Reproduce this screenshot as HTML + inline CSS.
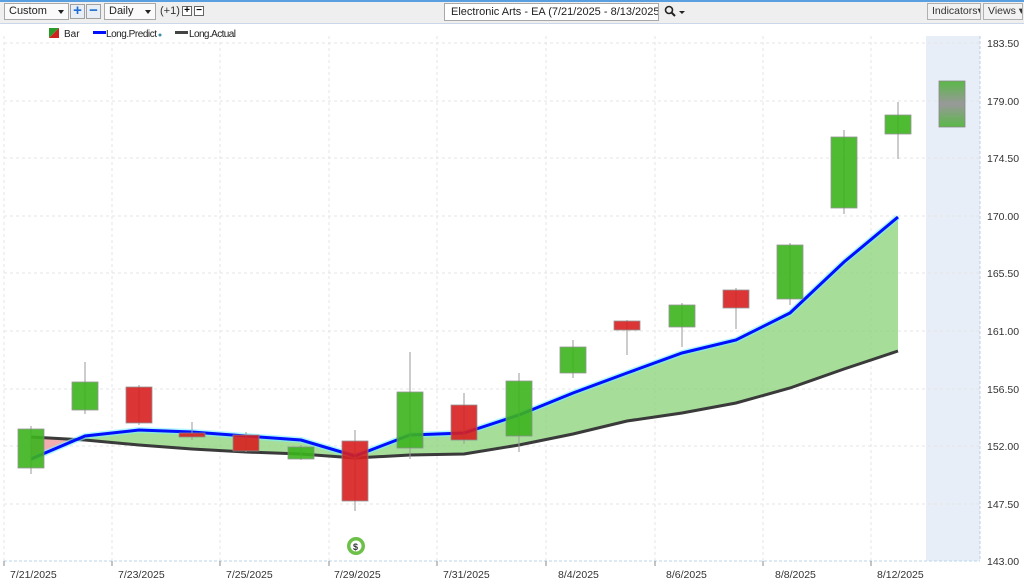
<!DOCTYPE html>
<html><head><meta charset="utf-8"><style>
body{margin:0;width:1024px;height:584px;overflow:hidden;background:#fff;font-family:"Liberation Sans",sans-serif;}
.tb{position:absolute;left:0;top:0;width:1024px;height:24px;background:#efefef;border-top:2px solid #5aa0e0;border-bottom:1px solid #c8d8e8;box-sizing:border-box;}
.dd{position:absolute;top:3px;height:17px;background:#fafafa;border:1px solid #a8a8a8;box-sizing:border-box;font-size:11px;line-height:15px;padding-left:4px;color:#222;white-space:nowrap;}
.dd:after{content:"";position:absolute;right:4px;top:6px;border-left:3px solid transparent;border-right:3px solid transparent;border-top:4px solid #222;}
.pb{position:absolute;top:4px;width:15px;height:15px;border:1px solid #a0a0a0;box-sizing:border-box;background:#e8eef6;color:#1c6fd0;font-weight:bold;font-size:15px;line-height:12px;text-align:center;}
.sb{position:absolute;top:6px;width:10px;height:10px;border:1px solid #666;box-sizing:border-box;background:#fff;font-size:10px;line-height:8px;text-align:center;font-weight:bold;}
.btn{position:absolute;top:3px;height:17px;border:1px solid #b0b0b0;box-sizing:border-box;background:#f2f2f2;font-size:10.5px;line-height:15px;padding-left:4px;color:#333;white-space:nowrap;overflow:hidden;}
</style></head><body>
<div class="tb"></div>
<div class="dd" style="left:4px;width:65px">Custom</div>
<div class="pb" style="left:70px">+</div>
<div class="pb" style="left:86px">−</div>
<div class="dd" style="left:104px;width:52px">Daily</div>
<div style="position:absolute;left:160px;top:5px;font-size:11px;color:#333">(+1)</div>
<div class="sb" style="left:182px">+</div>
<div class="sb" style="left:194px">−</div>
<div style="position:absolute;left:444px;top:3px;width:215px;height:18px;border:1px solid #a8a8a8;box-sizing:border-box;background:#fff;font-size:11px;line-height:16px;padding-left:6px;color:#222;white-space:nowrap;overflow:hidden">Electronic Arts - EA (7/21/2025 - 8/13/2025)</div>
<svg style="position:absolute;left:664px;top:5px" width="24" height="14"><circle cx="5" cy="5" r="3.5" fill="none" stroke="#222" stroke-width="1.6"/><line x1="7.5" y1="7.5" x2="11" y2="11" stroke="#222" stroke-width="2"/><path d="M15 6 L21 6 L18 9Z" fill="#222"/></svg>
<div class="btn" style="left:927px;width:54px">Indicators▾</div>
<div class="btn" style="left:983px;width:40px">Views ▾</div>
<svg style="position:absolute;left:0;top:0" width="1024" height="584" font-family="Liberation Sans, sans-serif">
<rect x="926" y="36" width="54" height="525" fill="#e8eef7"/>
<line x1="980" y1="36" x2="980" y2="561" stroke="#b8cfe6" stroke-dasharray="3,2"/>
<g stroke="#e4e4e4" stroke-dasharray="3,3">
<line x1="4" y1="43" x2="980" y2="43"/><line x1="4" y1="101" x2="980" y2="101"/><line x1="4" y1="158" x2="980" y2="158"/><line x1="4" y1="216" x2="980" y2="216"/><line x1="4" y1="273" x2="980" y2="273"/><line x1="4" y1="331" x2="980" y2="331"/><line x1="4" y1="389" x2="980" y2="389"/><line x1="4" y1="446" x2="980" y2="446"/><line x1="4" y1="504" x2="980" y2="504"/>
<line x1="4" y1="36" x2="4" y2="561"/><line x1="112" y1="36" x2="112" y2="561"/><line x1="220" y1="36" x2="220" y2="561"/><line x1="329" y1="36" x2="329" y2="561"/><line x1="437" y1="36" x2="437" y2="561"/><line x1="546" y1="36" x2="546" y2="561"/><line x1="655" y1="36" x2="655" y2="561"/><line x1="763" y1="36" x2="763" y2="561"/><line x1="871" y1="36" x2="871" y2="561"/>
</g>
<line x1="4" y1="561" x2="980" y2="561" stroke="#b8d4ee" stroke-dasharray="3,2"/>
<g stroke="#888"><line x1="4" y1="561" x2="4" y2="566"/><line x1="112" y1="561" x2="112" y2="566"/><line x1="220" y1="561" x2="220" y2="566"/><line x1="329" y1="561" x2="329" y2="566"/><line x1="437" y1="561" x2="437" y2="566"/><line x1="546" y1="561" x2="546" y2="566"/><line x1="655" y1="561" x2="655" y2="566"/><line x1="763" y1="561" x2="763" y2="566"/><line x1="871" y1="561" x2="871" y2="566"/></g>
<g font-size="10.5" fill="#333">
<text x="10" y="578">7/21/2025</text><text x="118" y="578">7/23/2025</text><text x="226" y="578">7/25/2025</text><text x="334" y="578">7/29/2025</text><text x="443" y="578">7/31/2025</text><text x="558" y="578">8/4/2025</text><text x="666" y="578">8/6/2025</text><text x="775" y="578">8/8/2025</text><text x="877" y="578">8/12/2025</text>
<text x="987" y="47">183.50</text><text x="987" y="105">179.00</text><text x="987" y="162">174.50</text><text x="987" y="220">170.00</text><text x="987" y="277">165.50</text><text x="987" y="335">161.00</text><text x="987" y="393">156.50</text><text x="987" y="450">152.00</text><text x="987" y="508">147.50</text><text x="987" y="565">143.00</text>
</g>
<path d="M49 28 L59 28 L49 38Z" fill="#2a9a2a"/><path d="M59 28 L59 38 L49 38Z" fill="#d02020"/>
<text x="64" y="37" font-size="10" fill="#222">Bar</text>
<rect x="93" y="31" width="13" height="3" fill="#0010ff"/>
<text x="106" y="37" font-size="10" fill="#222" textLength="51">Long.Predict</text><circle cx="160" cy="35" r="1.5" fill="#3a8aaa"/>
<rect x="175" y="31" width="13" height="3" fill="#444"/>
<text x="189" y="37" font-size="10" fill="#222" textLength="47">Long.Actual</text>
<path d="M31 459 L70 441 L70 439 L31 437Z" fill="#f0a0a0" opacity="0.85"/>
<path d="M70 441 L85 436 L139 430 L192 432 L246 436 L301 440 L355 456 L410 435 L464 433 L519 415 L573 393 L627 373 L682 353 L736 340 L790 313 L844 262 L898 217 L898 351 L844 369 L790 388 L736 403 L682 413 L627 421 L573 434 L519 445 L464 454 L410 455 L355 458 L301 454 L246 452 L192 449 L139 445 L85 440 Z" fill="#8fd47f" opacity="0.8"/>
<polyline points="31,437 85,440 139,445 192,449 246,452 301,454 355,458 410,455 464,454 519,445 573,434 627,421 682,413 736,403 790,388 844,369 898,351" fill="none" stroke="#3a3a3a" stroke-width="3"/>
<polyline points="31,459 85,436 139,430 192,432 246,436 301,440 355,456 410,435 464,433 519,415 573,393 627,373 682,353 736,340 790,313 844,262 898,217" fill="none" stroke="#7ff0ff" stroke-width="6" opacity="0.6"/>
<polyline points="31,459 85,436 139,430 192,432 246,436 301,440 355,456 410,435 464,433 519,415 573,393 627,373 682,353 736,340 790,313 844,262 898,217" fill="none" stroke="#0010ff" stroke-width="3"/>
<g stroke="#9a9a9a" stroke-width="1">
<line x1="31" y1="426" x2="31" y2="474"/><line x1="85" y1="362" x2="85" y2="414"/><line x1="139" y1="385" x2="139" y2="425"/><line x1="192" y1="422" x2="192" y2="440"/><line x1="246" y1="432" x2="246" y2="452"/><line x1="301" y1="445" x2="301" y2="460"/><line x1="355" y1="430" x2="355" y2="511"/><line x1="410" y1="352" x2="410" y2="459"/><line x1="464" y1="393" x2="464" y2="444"/><line x1="519" y1="373" x2="519" y2="452"/><line x1="573" y1="340" x2="573" y2="378"/><line x1="627" y1="320" x2="627" y2="355"/><line x1="682" y1="303" x2="682" y2="347"/><line x1="736" y1="288" x2="736" y2="329"/><line x1="790" y1="243" x2="790" y2="305"/><line x1="844" y1="130" x2="844" y2="214"/><line x1="898" y1="102" x2="898" y2="159"/>
</g>
<g stroke="#8a8a8a" stroke-width="0.8" opacity="0.9">
<rect x="18" y="429" width="26" height="39" fill="#3cb41e"/>
<rect x="72" y="382" width="26" height="28" fill="#3cb41e"/>
<rect x="126" y="387" width="26" height="36" fill="#d82020"/>
<rect x="179" y="433" width="26" height="4" fill="#d82020"/>
<rect x="233" y="435" width="26" height="16" fill="#d82020"/>
<rect x="288" y="447" width="26" height="12" fill="#3cb41e"/>
<rect x="342" y="441" width="26" height="60" fill="#d82020"/>
<rect x="397" y="392" width="26" height="56" fill="#3cb41e"/>
<rect x="451" y="405" width="26" height="35" fill="#d82020"/>
<rect x="506" y="381" width="26" height="55" fill="#3cb41e"/>
<rect x="560" y="347" width="26" height="26" fill="#3cb41e"/>
<rect x="614" y="321" width="26" height="9" fill="#d82020"/>
<rect x="669" y="305" width="26" height="22" fill="#3cb41e"/>
<rect x="723" y="290" width="26" height="18" fill="#d82020"/>
<rect x="777" y="245" width="26" height="54" fill="#3cb41e"/>
<rect x="831" y="137" width="26" height="71" fill="#3cb41e"/>
<rect x="885" y="115" width="26" height="19" fill="#3cb41e"/>
</g>
<defs><linearGradient id="gg" x1="0" y1="0" x2="0" y2="1"><stop offset="0" stop-color="#5ab848"/><stop offset="0.5" stop-color="#999"/><stop offset="1" stop-color="#5ab848"/></linearGradient></defs>
<rect x="939" y="81" width="26" height="46" fill="url(#gg)" stroke="#8a8a8a" stroke-width="0.8"/>
<circle cx="356" cy="546" r="9" fill="#6cc04a"/><circle cx="356" cy="546" r="5.5" fill="#fff"/>
<text x="353" y="550" font-size="9" font-weight="bold" fill="#333">$</text>
</svg>
</body></html>
